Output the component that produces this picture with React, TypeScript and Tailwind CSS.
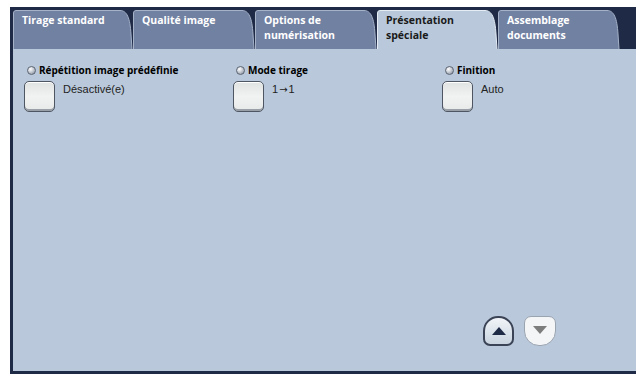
import React from 'react';

const tabs = [
  { lines: ['Tirage standard'], width: 120 },
  { lines: ['Qualité image'], width: 122 },
  { lines: ['Options de', 'numérisation'], width: 122 },
  { lines: ['Présentation', 'spéciale'], width: 121, active: true },
  { lines: ['Assemblage', 'documents'], width: 122 },
];

const features = [
  { label: 'Répétition image prédéfinie', value: 'Désactivé(e)' },
  { label: 'Mode tirage', value: '1→1' },
  { label: 'Finition', value: 'Auto' },
];

const Tab = ({ lines, width, active }: { lines: string[]; width: number; active?: boolean }) => {
  const h = 39;
  const d = `M0.5,${h} L0.5,3 Q0.5,0.5 3,0.5 L${width - 13},0.5 C${width - 6},0.5 ${width - 3},8 ${width - 2},24 L${width - 1},${h}`;
  return (
    <div className="relative h-[39px] shrink-0" style={{ width }}>
      <svg className="absolute inset-0" width={width} height={h} viewBox={`0 0 ${width} ${h}`}>
        <path d={d + ' Z'} fill={active ? '#b9c9db' : '#7181a2'} />
        <path d={d} fill="none" stroke={active ? '#e4ecf4' : '#a6b2c8'} strokeWidth="1" />
      </svg>
      <div
        className={`relative pl-[9px] pt-[3px] text-[10.5px] font-bold leading-[15px] ${active ? 'text-[#1a1a1a]' : 'text-white'}`}
        style={{ fontFamily: '"Open Sans", sans-serif' }}
      >
        {lines.map((l) => (
          <div key={l}>{l}</div>
        ))}
      </div>
    </div>
  );
};

const Led = () => (
  <span className="inline-block h-[9px] w-[9px] rounded-full border border-[#5d6573] bg-[radial-gradient(circle_at_35%_30%,#ffffff,#c7ccd4_45%,#7d8594)]" />
);

const Value = ({ text }: { text: string }) => {
  const parts = text.split('→');
  if (parts.length === 1) return <>{text}</>;
  return (
    <>
      {parts[0]}
      <span className="px-[1px] text-[10px]" style={{ fontFamily: '"DejaVu Sans", sans-serif' }}>
        →
      </span>
      {parts[1]}
    </>
  );
};

const Feature = ({ label, value }: { label: string; value: string }) => (
  <div className="w-[209px] shrink-0">
    <div className="flex items-center gap-[3px] pl-[3px]">
      <Led />
      <span className="text-[10px] font-bold text-black" style={{ fontFamily: '"Open Sans", sans-serif' }}>
        {label}
      </span>
    </div>
    <div className="mt-[3px] flex items-start gap-[8px]">
      <div className="h-[31px] w-[31px] rounded-[5px] border border-[#4f5663] bg-gradient-to-b from-[#dfe3e2] via-[#f1f3f2] to-[#e7eae9] shadow-[inset_0_-2px_0_#9aa0a8,inset_0_1px_0_#ffffff]" />
      <span className="pt-[1px] text-[11px] leading-[14px] text-[#222]" style={{ fontFamily: '"Liberation Sans", Arial, sans-serif' }}>
        <Value text={value} />
      </span>
    </div>
  </div>
);

export default function App() {
  return (
    <div className="h-[374px] w-[636px] overflow-hidden bg-white pl-[10px] pt-[7px]">
      <div className="flex h-full flex-col border-b-[3px] border-l-[3px] border-[#1f2a47] bg-[#b9c9db]">
        <div className="flex h-[42px] items-end bg-[#1f2a47]">
          {tabs.map((t) => (
            <Tab key={t.lines[0]} {...t} />
          ))}
        </div>
        <div className="relative flex-1">
          <div className="flex pl-[11px] pt-[14px]">
            {features.map((f) => (
              <Feature key={f.label} {...f} />
            ))}
          </div>
          <div className="absolute left-[470px] top-[267px] flex gap-[10px]">
            <div className="flex h-[30px] w-[31px] items-center justify-center rounded-b-[7px] rounded-t-[15px] border-2 border-[#3b4456] bg-gradient-to-b from-[#f2f5f8] to-[#c9d4e0]">
              <svg width="14" height="8" viewBox="0 0 14 8">
                <path d="M7 0 L14 8 L0 8 Z" fill="#1f2a47" />
              </svg>
            </div>
            <div className="flex h-[30px] w-[32px] items-start justify-center rounded-b-[15px] rounded-t-[7px] border border-[#9aa3b0] bg-[#f4f5f7] pt-[9px]">
              <svg width="14" height="8" viewBox="0 0 14 8">
                <path d="M0 0 L14 0 L7 8 Z" fill="#7d7d7d" />
              </svg>
            </div>
          </div>
        </div>
      </div>
    </div>
  );
}
